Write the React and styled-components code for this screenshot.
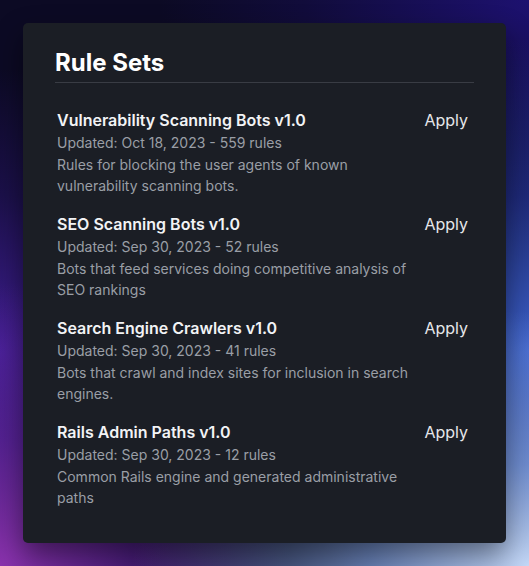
import React from "react";
import styled, { createGlobalStyle } from "styled-components";

const ruleSets = [
  {
    name: "Vulnerability Scanning Bots v1.0",
    updated: "Oct 18, 2023",
    count: 559,
    description: "Rules for blocking the user agents of known vulnerability scanning bots.",
  },
  {
    name: "SEO Scanning Bots v1.0",
    updated: "Sep 30, 2023",
    count: 52,
    description: "Bots that feed services doing competitive analysis of SEO rankings",
  },
  {
    name: "Search Engine Crawlers v1.0",
    updated: "Sep 30, 2023",
    count: 41,
    description: "Bots that crawl and index sites for inclusion in search engines.",
  },
  {
    name: "Rails Admin Paths v1.0",
    updated: "Sep 30, 2023",
    count: 12,
    description: "Common Rails engine and generated administrative paths",
  },
];

const GlobalStyle = createGlobalStyle`
  html, body {
    margin: 0;
    height: 100%;
  }
  body {
    font-family: Inter, "Noto Sans", sans-serif;
    background-color: #0c0a24;
    background-image:
      radial-gradient(ellipse 75% 45% at 100% 100%, #c4d8f7 0%, rgba(140, 175, 235, 0.7) 40%, rgba(70, 110, 210, 0) 100%),
      radial-gradient(ellipse 55% 50% at 0% 100%, #8a32ad 0%, rgba(110, 40, 170, 0.6) 45%, rgba(80, 30, 150, 0) 100%),
      radial-gradient(ellipse 50% 55% at 100% 62%, #3d62cc 0%, rgba(45, 70, 190, 0.5) 50%, rgba(30, 30, 140, 0) 100%),
      radial-gradient(ellipse 45% 50% at 0% 62%, #3f1e92 0%, rgba(50, 25, 130, 0.4) 55%, rgba(30, 15, 90, 0) 100%),
      radial-gradient(ellipse 70% 45% at 100% 0%, #1d1170 0%, rgba(25, 15, 95, 0.4) 60%, rgba(12, 10, 36, 0) 100%);
  }
  #root {
    height: 100%;
  }
`;

const Page = styled.div`
  box-sizing: border-box;
  height: 100%;
  padding: 23px;
  display: flex;
`;

const Card = styled.section`
  flex: 1;
  box-sizing: border-box;
  padding: 24px 32px;
  background: #1b1e25;
  border-radius: 5px;
  box-shadow: 0 12px 28px rgba(0, 0, 0, 0.45);
`;

const Heading = styled.h2`
  margin: 0;
  padding-bottom: 3px;
  font-size: 24px;
  line-height: 32px;
  font-weight: 700;
  color: #ffffff;
  border-bottom: 1px solid #393c44;
`;

const List = styled.ul`
  list-style: none;
  margin: 25px 0 0;
  padding: 0 6px 0 2px;
  display: flex;
  flex-direction: column;
  gap: 16px;
`;

const Item = styled.li`
  display: flex;
  align-items: flex-start;
  gap: 10px;
`;

const Info = styled.div`
  flex: 1;
  max-width: 356px;
`;

const Name = styled.div`
  font-size: 16px;
  line-height: 24px;
  font-weight: 600;
  color: #f2f3f5;
`;

const Meta = styled.div`
  font-size: 14px;
  line-height: ${({ lh }) => lh};
  color: #9a9ea6;
`;

const ApplyButton = styled.button`
  margin-left: auto;
  padding: 0;
  border: none;
  background: none;
  font-family: inherit;
  font-size: 16px;
  line-height: 24px;
  color: #e6e7ea;
  cursor: pointer;
`;

export default function App() {
  return (
    <>
      <GlobalStyle />
      <Page>
        <Card>
          <Heading>Rule Sets</Heading>
          <List>
            {ruleSets.map((rs) => (
              <Item key={rs.name}>
                <Info>
                  <Name>{rs.name}</Name>
                  <Meta lh="22px">
                    Updated: {rs.updated} - {rs.count} rules
                  </Meta>
                  <Meta lh="21px">{rs.description}</Meta>
                </Info>
                <ApplyButton>Apply</ApplyButton>
              </Item>
            ))}
          </List>
        </Card>
      </Page>
    </>
  );
}
